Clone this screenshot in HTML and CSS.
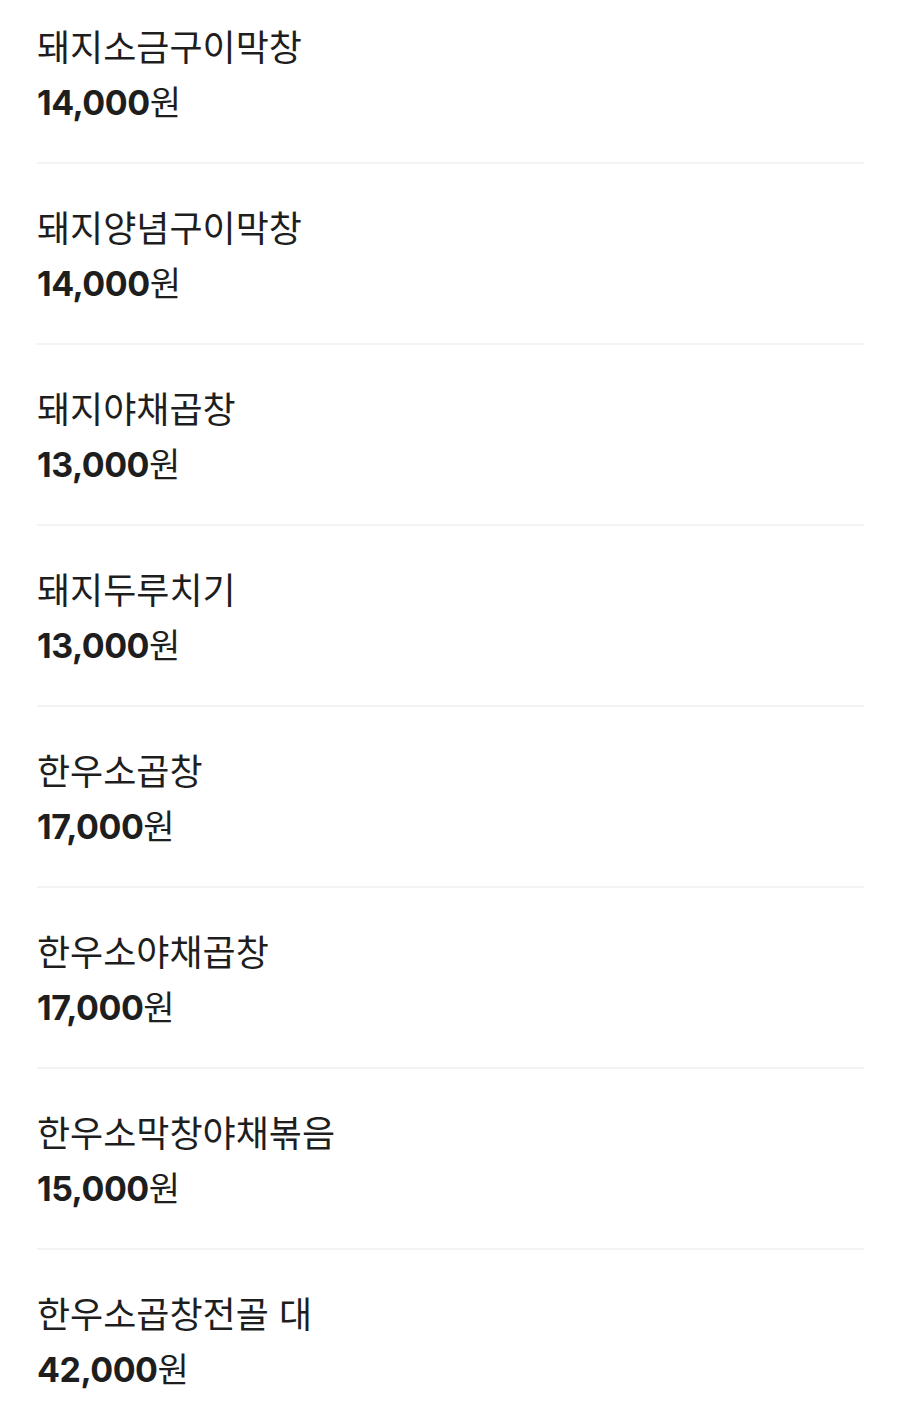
FILE: index.html
```html
<!DOCTYPE html>
<html lang="ko">
<head>
  <meta charset="UTF-8" />
  <meta name="viewport" content="width=device-width, initial-scale=1.0"/>
  <title>메뉴</title>
  <link rel="stylesheet" href="styles.css">
</head>
<body>

  <ul class="menu">
    <li class="item">
      <div class="name">돼지소금구이막창</div>
      <div class="price"><b>14,000</b>원</div>
    </li>
    <li class="item">
      <div class="name">돼지양념구이막창</div>
      <div class="price"><b>14,000</b>원</div>
    </li>
    <li class="item">
      <div class="name">돼지야채곱창</div>
      <div class="price"><b>13,000</b>원</div>
    </li>
    <li class="item">
      <div class="name">돼지두루치기</div>
      <div class="price"><b>13,000</b>원</div>
    </li>
    <li class="item">
      <div class="name">한우소곱창</div>
      <div class="price"><b>17,000</b>원</div>
    </li>
    <li class="item">
      <div class="name">한우소야채곱창</div>
      <div class="price"><b>17,000</b>원</div>
    </li>
    <li class="item">
      <div class="name">한우소막창야채볶음</div>
      <div class="price"><b>15,000</b>원</div>
    </li>
    <li class="item">
      <div class="name">한우소곱창전골 대</div>
      <div class="price"><b>42,000</b>원</div>
    </li>
  </ul>

</body>
</html>
```

FILE: styles.css
```css
* {
  box-sizing: border-box;
  padding: 0;
  margin: 0;
}

body {
  background: #fff;
  color: #1e1e1e;
  font-family: "Noto Sans CJK KR", "Noto Sans", sans-serif;
}

.menu {
  list-style: none;
  padding: 0 36px 0 37px;
}

.item {
  padding: 38px 0 37px;
  border-bottom: 2px solid #f3f3f3;
}

.item:first-child {
  padding-top: 21px;
}

.name {
  font-size: 36px;
  line-height: 48px;
}

.price {
  margin-top: 8px;
  height: 48px;
  font-size: 34px;
  line-height: 48px;
}

.price b {
  font-family: Inter, "Noto Sans", sans-serif;
  font-weight: bold;
  line-height: 1;
  letter-spacing: -0.5px;
}
```
